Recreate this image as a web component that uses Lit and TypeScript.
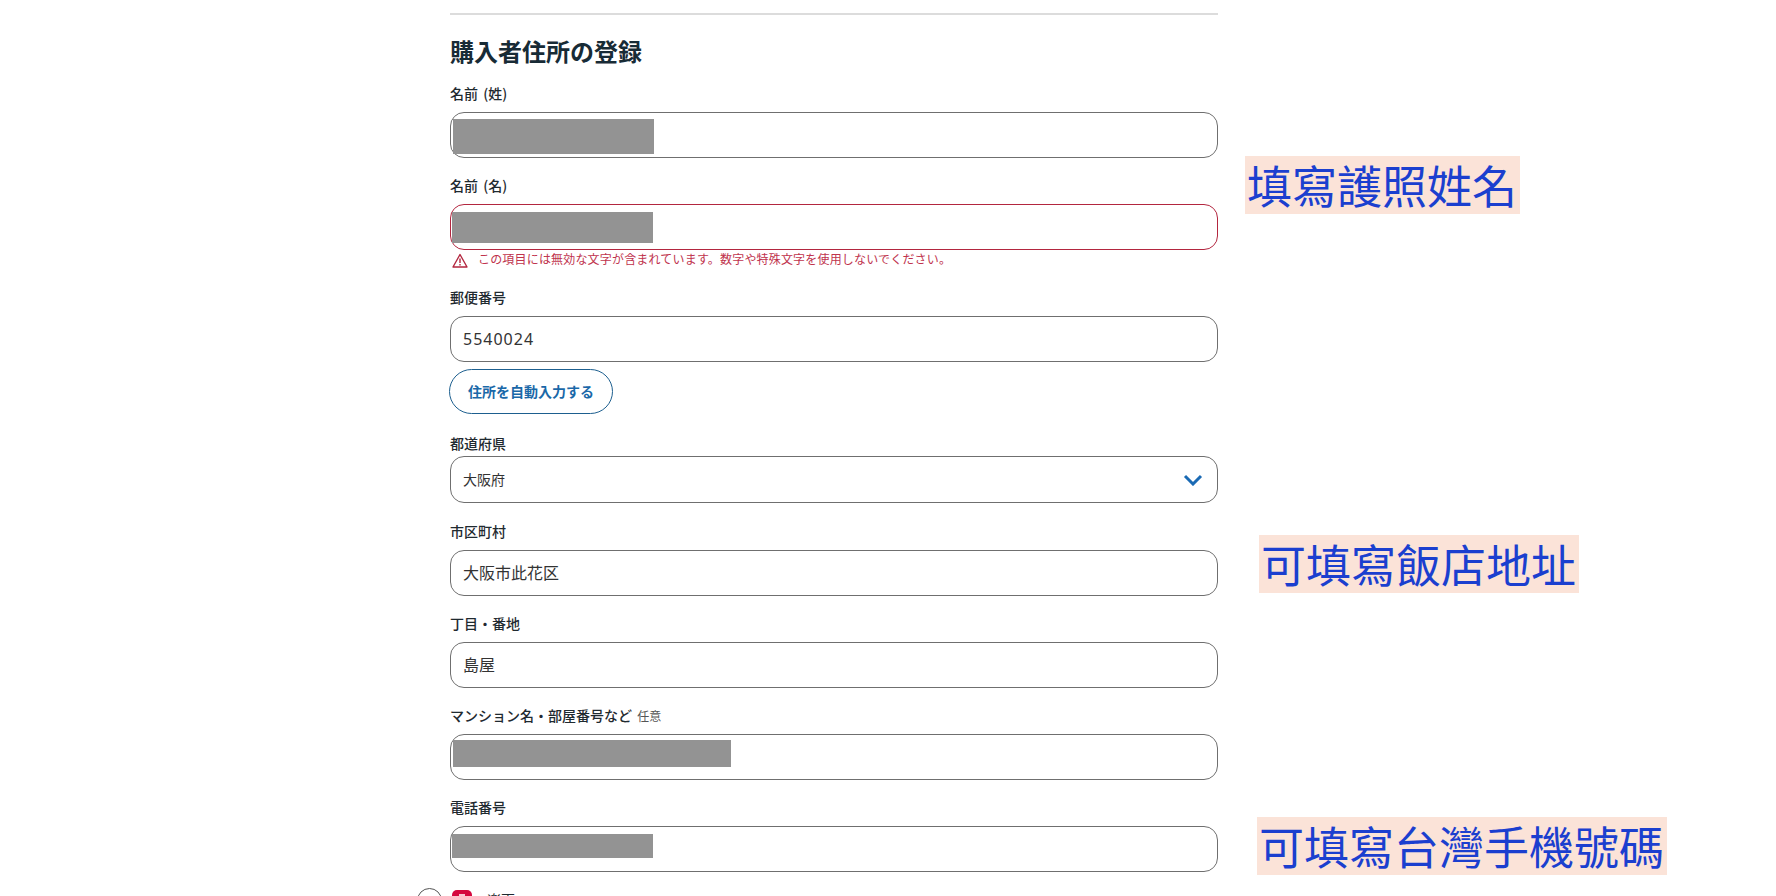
import { LitElement, html, css } from "lit";
import { customElement } from "lit/decorators.js";

@customElement("app-root")
class AppRoot extends LitElement {
    static styles = css`
        :host {
            display: block;
            position: relative;
            height: 896px;
            overflow: hidden;
            background: #fff;
            font-family: "Noto Sans CJK JP", "Noto Sans", sans-serif;
            color: #1f2a30;
        }
        .form {
            width: 768px;
            margin-left: 450px;
            padding-top: 13px;
        }
        hr {
            border: 0;
            height: 2px;
            background: #dcdcdc;
            margin: 0 0 16px;
        }
        h2 {
            margin: 0 0 13px;
            font-size: 24px;
            line-height: 40px;
            font-weight: 700;
            color: #182b36;
        }
        .field {
            margin-bottom: 18px;
        }
        .field.err {
            margin-bottom: 20px;
        }
        .field.pref {
            margin-bottom: 19px;
        }
        label {
            display: block;
            height: 18px;
            font-size: 14px;
            line-height: 18px;
            font-weight: 500;
            word-spacing: 2px;
            margin-bottom: 10px;
        }
        .pref label {
            margin-bottom: 4px;
        }
        .opt {
            font-size: 12px;
            font-weight: 400;
            color: #555;
        }
        .box {
            box-sizing: border-box;
            height: 46px;
            display: flex;
            align-items: center;
            justify-content: space-between;
            border: 1px solid #6f6f6f;
            border-radius: 14px;
            padding: 0 12px 2px;
            font-size: 16px;
            color: #333;
            position: relative;
        }
        .box.bad {
            border-color: #b3263f;
        }
        .box.sel {
            height: 47px;
            padding: 0 14px 2px 12px;
            font-size: 14px;
        }
        .box.sel svg {
            margin-top: 2px;
        }
        .mask {
            position: absolute;
            background: #939393;
        }
        .zip {
            margin-top: 2px;
            letter-spacing: 1px;
            font-family: "Noto Sans", sans-serif;
        }
        .error {
            display: flex;
            align-items: center;
            gap: 10px;
            height: 18px;
            margin-left: 2px;
            font-size: 12px;
            line-height: 18px;
            color: #c0334d;
            letter-spacing: 0.18px;
        }
        .error svg {
            margin-top: 3px;
        }
        .auto {
            box-sizing: border-box;
            display: block;
            width: 164px;
            height: 45px;
            margin: 7px 0 20px -1px;
            padding-bottom: 2px;
            border: 1px solid #1d5f8f;
            border-radius: 23px;
            background: #fff;
            color: #1a68a8;
            font: 700 14px "Noto Sans CJK JP", sans-serif;
        }
        .pay {
            display: flex;
            align-items: flex-start;
            margin: -2px 0 0 -33px;
            font-size: 14px;
        }
        .radio {
            box-sizing: border-box;
            width: 25px;
            height: 25px;
            border: 1px solid #555;
            border-radius: 50%;
        }
        .brand {
            box-sizing: border-box;
            width: 20px;
            height: 20px;
            margin: 2px 0 0 10px;
            padding-top: 4px;
            border-radius: 5px;
            background: #d5083f;
        }
        .brand i {
            display: block;
            width: 6px;
            height: 2px;
            margin: 0 auto;
            background: #f7c6d3;
        }
        .pay span {
            margin: 1px 0 0 15px;
        }
        .note {
            position: absolute;
            box-sizing: border-box;
            height: 58px;
            padding: 0 2px;
            background: #fbe3d8;
            color: #1b3fcf;
            font-family: "Noto Sans CJK TC", sans-serif;
            font-size: 45px;
            line-height: 58px;
            white-space: nowrap;
        }
        .n1 { left: 1245px; top: 156px; width: 275px; }
        .n2 { left: 1259px; top: 535px; width: 320px; }
        .n3 { left: 1257px; top: 817px; width: 410px; }
    `;

    field(name: any, value: any) {
        return html`
            <div class="field">
                <label>${name}</label>
                <div class="box">${value}</div>
            </div>
        `;
    }

    // grey block hiding personal data in the original
    mask(left: number, top: number, width: number, height: number) {
        return html`<div class="mask" style="left:${left}px;top:${top}px;width:${width}px;height:${height}px"></div>`;
    }

    render() {
        return html`
            <div class="form">
                <hr />
                <h2>購入者住所の登録</h2>
                ${this.field("名前 (姓)", this.mask(2, 6, 201, 35))}
                <div class="field err">
                    <label>名前 (名)</label>
                    <div class="box bad">${this.mask(1, 7, 201, 31)}</div>
                    <div class="error">
                        <svg width="16" height="15" viewBox="0 0 16 15" fill="none" stroke="#b3263f" stroke-width="1.4">
                            <path d="M8 1.5 L15 14 H1 Z" stroke-linejoin="round" />
                            <path d="M8 5.5 V10 M8 11 V12.5" />
                        </svg>
                        この項目には無効な文字が含まれています。数字や特殊文字を使用しないでください。
                    </div>
                </div>
                <div>
                    <label>郵便番号</label>
                    <div class="box"><span class="zip">5540024</span></div>
                    <button class="auto">住所を自動入力する</button>
                </div>
                <div class="field pref">
                    <label>都道府県</label>
                    <div class="box sel">
                        大阪府
                        <svg width="20" height="12" viewBox="0 0 20 12" fill="none" stroke="#1a6ab4" stroke-width="3">
                            <path d="M2 2 L10 10 L18 2" />
                        </svg>
                    </div>
                </div>
                ${this.field("市区町村", "大阪市此花区")}
                ${this.field("丁目・番地", "島屋")}
                ${this.field(html`マンション名・部屋番号など <span class="opt">任意</span>`, this.mask(2, 5, 278, 27))}
                ${this.field("電話番号", this.mask(1, 7, 201, 24))}
                <div class="pay">
                    <div class="radio"></div>
                    <div class="brand"><i></i></div>
                    <span>楽天</span>
                </div>
            </div>
            <div class="note n1">填寫護照姓名</div>
            <div class="note n2">可填寫飯店地址</div>
            <div class="note n3">可填寫台灣手機號碼</div>
        `;
    }
}
